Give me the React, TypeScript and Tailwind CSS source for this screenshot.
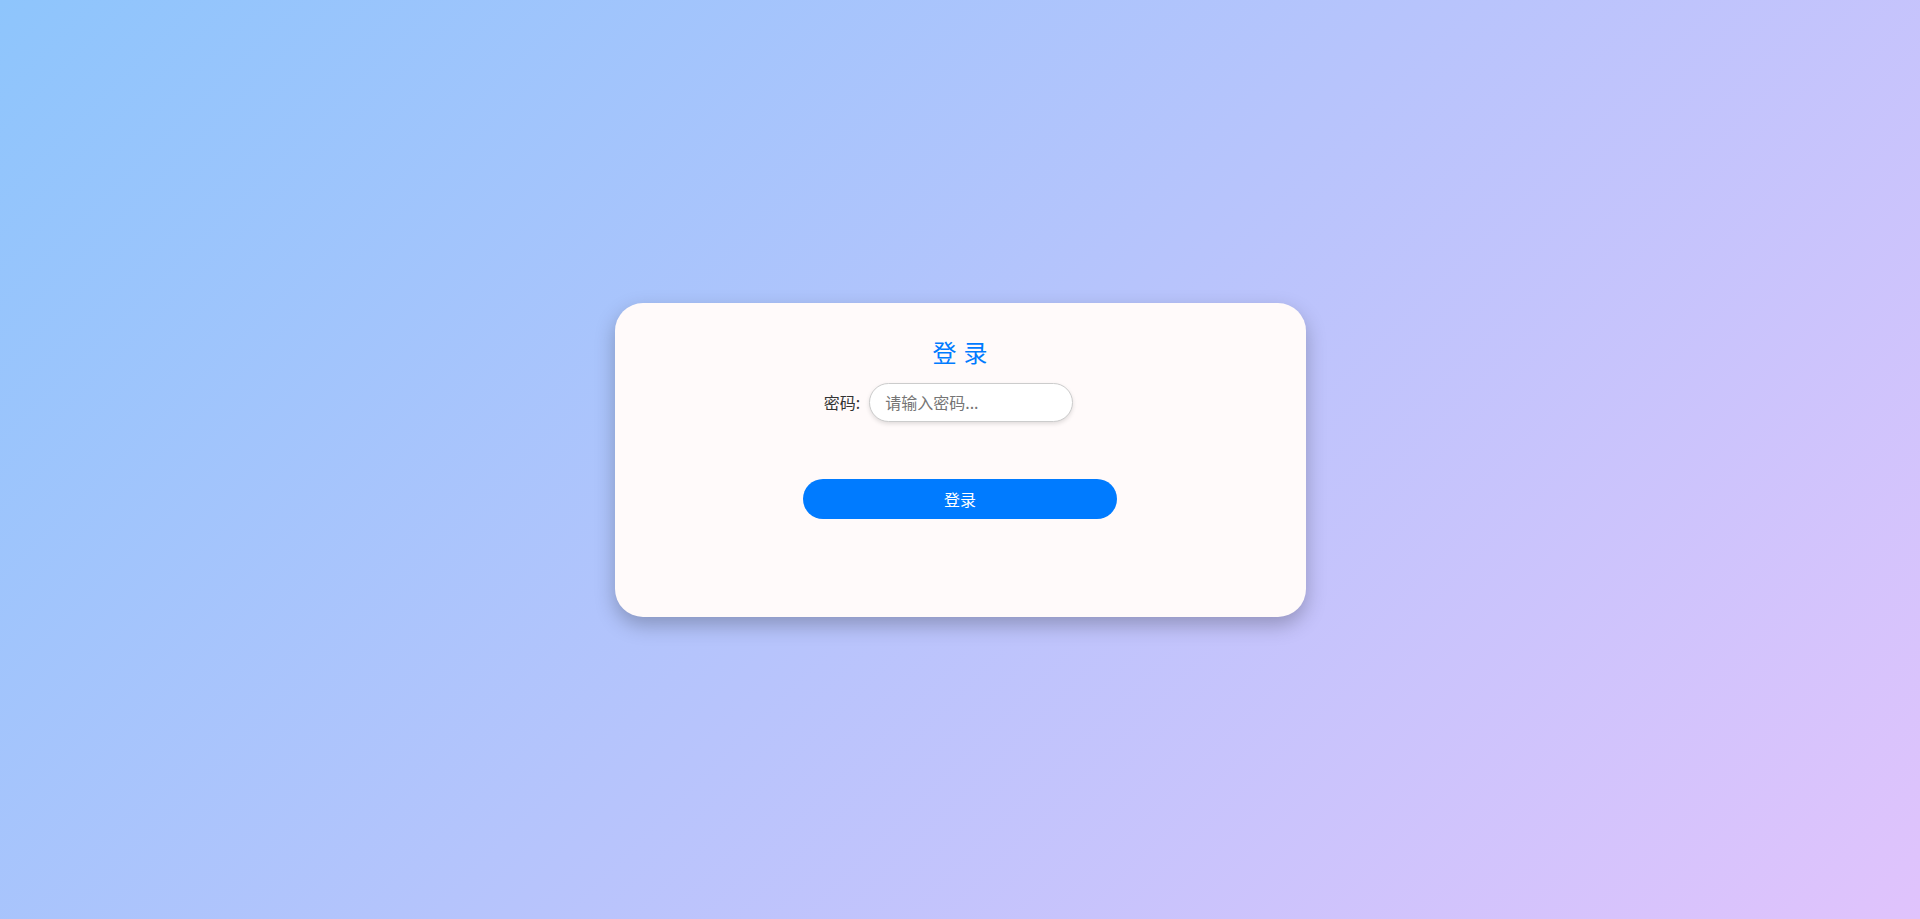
import React, { useState } from 'react';

const font = "font-['Noto_Sans_CJK_SC','Noto_Sans',sans-serif]";

export default function App() {
  const [password, setPassword] = useState('');

  return (
    <div className={`flex min-h-screen items-center justify-center bg-[linear-gradient(135deg,#8ec5fc_0%,#e0c3fc_100%)] ${font}`}>
      <div className="flex h-[314px] w-[691px] flex-col items-center rounded-[28px] bg-[#fffafa] pt-[35px] shadow-[0_8px_20px_rgba(0,0,0,0.25)]">
        <h1 className="text-[24px] leading-[28px] tracking-[7px] pl-[7px] text-[#007bff]">登录</h1>

        <div className="mt-[17px] flex items-center pr-[23px]">
          <label className="mr-[9px] text-[16px] leading-none text-[#333]">密码:</label>
          <input
            type="password"
            value={password}
            onChange={(e) => setPassword(e.target.value)}
            placeholder="请输入密码..."
            className="h-[39px] w-[204px] rounded-full border border-[#ccc] bg-white pl-[15px] text-[16px] text-[#333] shadow-[0_2px_4px_rgba(0,0,0,0.12)] outline-none placeholder:text-[#757575]"
          />
        </div>

        <button className="mt-[57px] h-[40px] w-[314px] rounded-full bg-[#007bff] text-[16px] text-white">
          登录
        </button>
      </div>
    </div>
  );
}
